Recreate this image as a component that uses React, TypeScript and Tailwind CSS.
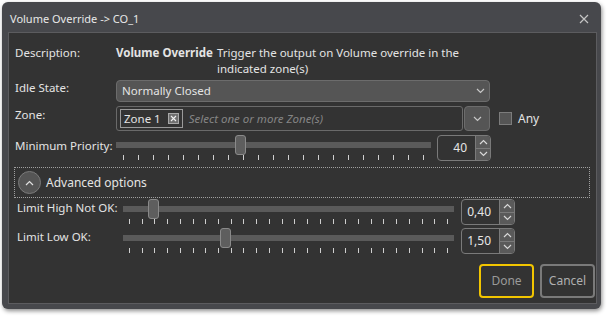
import React from "react";

const font = { fontFamily: '"Noto Sans", "Open Sans", sans-serif' };

const Chevron = ({ up = false, className = "" }: { up?: boolean; className?: string }) => (
  <svg width="9" height="6" viewBox="0 0 9 6" className={className}>
    <polyline
      points={up ? "1,5 4.5,1.5 8,5" : "1,1 4.5,4.5 8,1"}
      fill="none"
      stroke="currentColor"
      strokeWidth="1.2"
    />
  </svg>
);

const Slider = ({
  width,
  ticks,
  frac,
  inset,
}: {
  width: number;
  ticks: number;
  frac: number;
  inset: number;
}) => {
  const span = width - inset * 2;
  const left = inset + span * frac - 5;
  return (
    <div className="relative h-[25px]" style={{ width }}>
      <div className="mt-[7px] h-[6px] bg-[#5a5a5a]" />
      <div className="mt-[7px] flex justify-between" style={{ paddingLeft: inset, paddingRight: inset }}>
        {Array.from({ length: ticks }).map((_, i) => (
          <div key={i} className="w-px h-[5px] bg-[#cfcfcf]" />
        ))}
      </div>
      {/* thumb */}
      <div
        className="absolute top-0 w-[11px] h-[20px] rounded-[3px] bg-[#5e5e5e] border border-[#8a8a8a]"
        style={{ left }}
      />
    </div>
  );
};

const Spin = ({ value, w = 54 }: { value: string; w?: number }) => (
  <div
    className="flex h-[26px] rounded-[4px] border border-[#7a7a7a] overflow-hidden"
    style={{ width: w }}
  >
    <div className="flex-1 flex items-center justify-end pr-[8px] text-[12px] text-[#e6e6e6]">
      {value}
    </div>
    <div className="w-[15px] flex flex-col bg-[#5a5a5a] border-l border-[#7a7a7a] text-[#d8d8d8]">
      <div className="flex-1 flex items-center justify-center border-b border-[#7a7a7a]">
        <Chevron up />
      </div>
      <div className="flex-1 flex items-center justify-center">
        <Chevron />
      </div>
    </div>
  </div>
);

export default function App() {
  return (
    <div className="w-[608px] h-[316px] bg-white pt-[2px] pl-[2px]" style={font}>
      <div className="w-[599px] h-[307px] bg-[#47484c] rounded-[6px] shadow-[1px_2px_4px_rgba(0,0,0,0.45)] flex flex-col">
        {/* title bar */}
        <div className="h-[30px] shrink-0 flex items-center justify-between pl-[8px] pr-[12px] pt-[4px]">
          <span className="text-[11px] text-[#e8e8e8]">Volume Override -&gt; CO_1</span>
          <svg width="10" height="10" viewBox="0 0 10 10">
            <path d="M1 1L9 9M9 1L1 9" stroke="#c4c4c4" strokeWidth="1.2" />
          </svg>
        </div>

        {/* content */}
        <div className="flex-1 ml-[6px] mr-[4px] mb-[5px] bg-[#333333] border border-[#5c5c5f] text-[11.5px] leading-[16px] text-[#e4e4e4] flex flex-col whitespace-nowrap">
          {/* description */}
          <div className="flex mt-[12px] pl-[6px]">
            <div className="w-[101px] shrink-0">Description:</div>
            <div className="font-bold w-[101px] shrink-0">Volume Override</div>
            <div>
              Trigger the output on Volume override in the
              <br />
              indicated zone(s)
            </div>
          </div>

          {/* idle state */}
          <div className="flex mt-[3px] pl-[6px]">
            <div className="w-[101px] shrink-0">Idle State:</div>
            <div className="w-[374px] h-[22px] rounded-[4px] bg-[#555555] border border-[#6c6c6c] flex items-center justify-between pl-[5px] pr-[4px] text-[11.5px]">
              <span>Normally Closed</span>
              <Chevron className="text-[#c8c8c8]" />
            </div>
          </div>

          {/* zone */}
          <div className="flex mt-[4px] pl-[6px]">
            <div className="w-[101px] shrink-0 pt-[1px]">Zone:</div>
            <div className="w-[347px] h-[25px] rounded-[3px] border border-[#6a6a6a] flex items-center pl-[3px]">
              <div className="h-[19px] border border-[#9a9a9a] flex items-center pl-[3px] pr-[3px] gap-[7px] text-[11.5px]">
                <span>Zone 1</span>
                <span className="w-[11px] h-[11px] bg-[#707070] border border-[#a8a8a8] flex items-center justify-center">
                  <svg width="7" height="7" viewBox="0 0 7 7">
                    <path d="M1 1L6 6M6 1L1 6" stroke="#f0f0f0" strokeWidth="1.1" />
                  </svg>
                </span>
              </div>
              <span className="ml-[6px] italic text-[#858585] text-[11.5px]">Select one or more Zone(s)</span>
            </div>
            <div className="ml-[1px] w-[26px] h-[25px] rounded-[4px] bg-[#555555] border border-[#6c6c6c] flex items-center justify-center text-[#c8c8c8]">
              <Chevron />
            </div>
            <div className="ml-[9px] mt-[6px] w-[13px] h-[13px] bg-[#555555] border border-[#7c7c7c]" />
            <span className="ml-[6px] pt-[5px] text-[12px]">Any</span>
          </div>

          {/* minimum priority */}
          <div className="flex mt-[4px] pl-[6px]">
            <div className="w-[101px] shrink-0 pt-[3px]">Minimum Priority:</div>
            <Slider width={315} ticks={21} frac={0.39} inset={7} />
            <div className="ml-[6px]">
              <Spin value="40" />
            </div>
          </div>

          {/* advanced options */}
          <div className="mt-[6px] ml-[5px] mr-[6px] h-[31px] border border-dotted border-[#a0a0a0] flex items-center pl-[3px]">
            <div className="w-[23px] h-[23px] rounded-full bg-[#555555] border border-[#7a7a7a] flex items-center justify-center text-[#e0e0e0]">
              <Chevron up />
            </div>
            <span className="ml-[5px] text-[12px]">Advanced options</span>
          </div>

          {/* limit high */}
          <div className="flex mt-[1px] pl-[8px]">
            <div className="w-[106px] shrink-0 pt-[1px]">Limit High Not OK:</div>
            <Slider width={331} ticks={26} frac={0.075} inset={6} />
            <div className="ml-[7px]">
              <Spin value="0,40" />
            </div>
          </div>

          {/* limit low */}
          <div className="flex mt-[3px] pl-[8px]">
            <div className="w-[106px] shrink-0 pt-[1px]">Limit Low OK:</div>
            <Slider width={331} ticks={26} frac={0.3} inset={6} />
            <div className="ml-[7px]">
              <Spin value="1,50" />
            </div>
          </div>

          {/* buttons */}
          <div className="flex justify-end gap-[6px] mt-[10px] mr-[1px] text-[12px]">
            <button className="w-[55px] h-[34px] rounded-[4px] border-2 border-[#f2c500] text-[#9a9a9a]">
              Done
            </button>
            <button className="w-[55px] h-[34px] rounded-[4px] border-2 border-[#7a7a7a] text-[#b0b0b0]">
              Cancel
            </button>
          </div>
        </div>
      </div>
    </div>
  );
}
